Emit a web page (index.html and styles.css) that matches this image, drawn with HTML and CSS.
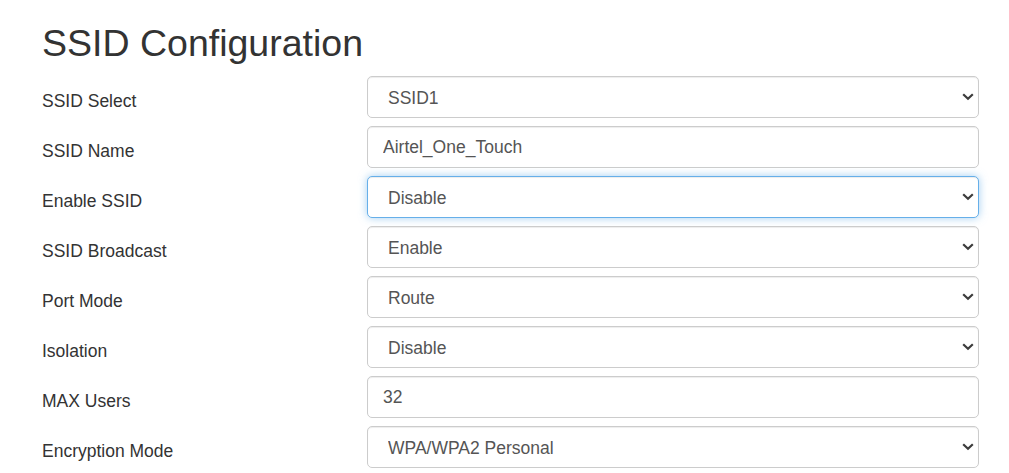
FILE: index.html
```html
<!DOCTYPE html>
<html lang="en">
<head>
<meta charset="utf-8">
<title>SSID Configuration</title>
<link rel="stylesheet" href="styles.css">
</head>
<body>
<div class="page">
  <h1 class="title">SSID Configuration</h1>
  <form class="form">
    <div class="row">
      <label class="label">SSID Select</label>
      <div class="control">
        <select class="field select"><option>SSID1</option></select>
        <svg class="chev" width="12" height="8" viewBox="0 0 12 8"><path d="M1.2 1.2 L6 5.8 L10.8 1.2" fill="none" stroke="#3c3c3c" stroke-width="2.2"/></svg>
      </div>
    </div>
    <div class="row">
      <label class="label">SSID Name</label>
      <div class="control">
        <input class="field input" type="text" value="Airtel_One_Touch">
      </div>
    </div>
    <div class="row">
      <label class="label">Enable SSID</label>
      <div class="control">
        <select class="field select is-focus"><option>Disable</option></select>
        <svg class="chev" width="12" height="8" viewBox="0 0 12 8"><path d="M1.2 1.2 L6 5.8 L10.8 1.2" fill="none" stroke="#3c3c3c" stroke-width="2.2"/></svg>
      </div>
    </div>
    <div class="row">
      <label class="label">SSID Broadcast</label>
      <div class="control">
        <select class="field select"><option>Enable</option></select>
        <svg class="chev" width="12" height="8" viewBox="0 0 12 8"><path d="M1.2 1.2 L6 5.8 L10.8 1.2" fill="none" stroke="#3c3c3c" stroke-width="2.2"/></svg>
      </div>
    </div>
    <div class="row">
      <label class="label">Port Mode</label>
      <div class="control">
        <select class="field select"><option>Route</option></select>
        <svg class="chev" width="12" height="8" viewBox="0 0 12 8"><path d="M1.2 1.2 L6 5.8 L10.8 1.2" fill="none" stroke="#3c3c3c" stroke-width="2.2"/></svg>
      </div>
    </div>
    <div class="row">
      <label class="label">Isolation</label>
      <div class="control">
        <select class="field select"><option>Disable</option></select>
        <svg class="chev" width="12" height="8" viewBox="0 0 12 8"><path d="M1.2 1.2 L6 5.8 L10.8 1.2" fill="none" stroke="#3c3c3c" stroke-width="2.2"/></svg>
      </div>
    </div>
    <div class="row">
      <label class="label">MAX Users</label>
      <div class="control">
        <input class="field input" type="text" value="32">
      </div>
    </div>
    <div class="row">
      <label class="label">Encryption Mode</label>
      <div class="control">
        <select class="field select"><option>WPA/WPA2 Personal</option></select>
        <svg class="chev" width="12" height="8" viewBox="0 0 12 8"><path d="M1.2 1.2 L6 5.8 L10.8 1.2" fill="none" stroke="#3c3c3c" stroke-width="2.2"/></svg>
      </div>
    </div>
  </form>
</div>
</body>
</html>
```
FILE: styles.css
```css
html, body {
  margin: 0;
  padding: 0;
  background: #fff;
}
body {
  font-family: "Liberation Sans", Arial, sans-serif;
  color: #333;
  overflow: hidden;
}
.page {
  padding-left: 42px;
  width: 937px;
}
.title {
  margin: 23px 0 0;
  font-size: 37.5px;
  font-weight: 400;
  line-height: 41px;
  color: #333;
}
.form {
  margin-top: 12px;
  display: flex;
  flex-direction: column;
  gap: 8px;
}
.row {
  display: flex;
  align-items: flex-start;
  height: 42px;
}
.label {
  width: 325px;
  flex: none;
  padding-top: 13px;
  font-size: 17.5px;
  line-height: 25px;
  color: #333;
}
.control {
  position: relative;
  width: 612px;
  flex: none;
}
.field {
  box-sizing: border-box;
  display: block;
  width: 612px;
  height: 42px;
  margin: 0;
  border: 1px solid #ccc;
  border-radius: 5px;
  background: #fff;
  box-shadow: inset 0 1px 1px rgba(0, 0, 0, 0.075);
  font-family: "Liberation Sans", Arial, sans-serif;
  font-size: 17.5px;
  color: #555;
  outline: none;
}
.input {
  padding: 0 15px;
}
.select {
  -webkit-appearance: none;
  appearance: none;
  padding: 2px 30px 0 20px;
}
.is-focus {
  border-color: #66afe9;
  box-shadow: inset 0 1px 1px rgba(0, 0, 0, 0.075), 0 0 8px rgba(102, 175, 233, 0.6);
}
.chev {
  position: absolute;
  right: 5px;
  top: 17px;
  pointer-events: none;
}
```
